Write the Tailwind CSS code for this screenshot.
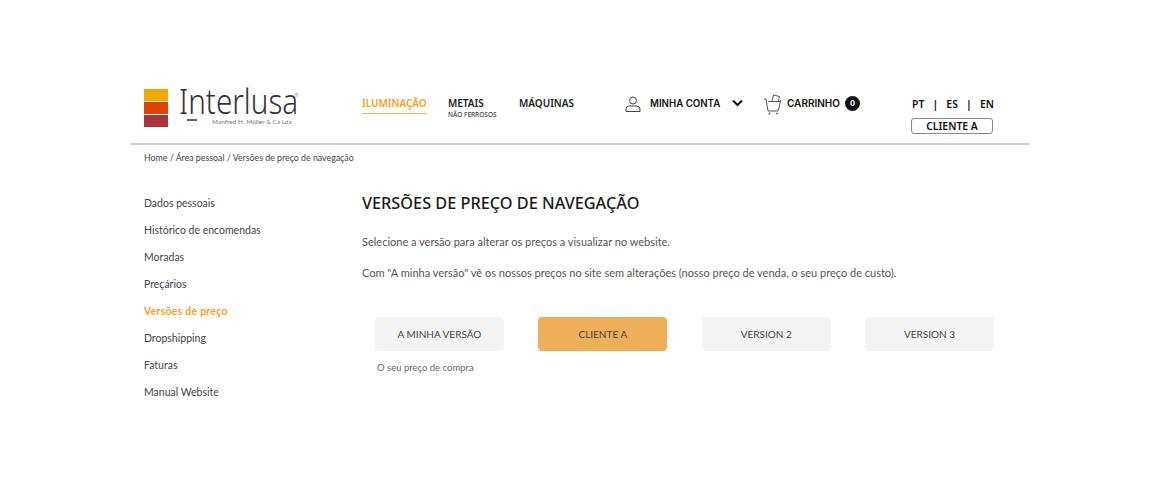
<!DOCTYPE html>
<html lang="pt">
<head>
<meta charset="utf-8">
<script src="https://cdn.jsdelivr.net/npm/@tailwindcss/browser@4"></script>
<title>Interlusa</title>
</head>
<body class="bg-white font-['Lato','Open_Sans',sans-serif] text-[#3c3c3c] w-[1160px] h-[480px] overflow-hidden">
<div class="w-[900px] ml-[130px] pt-[85px]">
  <header class="h-[60px] flex border-b-2 border-[#cfcfcf] pl-[14px] relative">
    <div class="w-[218px] shrink-0 flex items-start pt-[4px]">
      <div class="w-[24px] flex flex-col gap-[1.5px]">
        <div class="h-[11.5px] bg-[#f5a800]"></div>
        <div class="h-[11.5px] bg-[#e04403]"></div>
        <div class="h-[11.5px] bg-[#a93338]"></div>
      </div>
      <div class="ml-[11px] relative h-[40px] w-[120px]">
        <div class="-mt-[3px] font-['Noto_Sans',sans-serif] font-light text-[34px] leading-[30px] text-[#333] scale-x-[0.87] origin-left">Interlusa</div>
        <div class="absolute left-[33px] top-[29px] text-[6.5px] leading-[8px] text-[#777] whitespace-nowrap">Manfred H. Müller &amp; Ca Lda</div>
        <div class="absolute left-[8px] top-[30px] w-[10px] h-[1.5px] bg-[#666]"></div>
        <div class="absolute left-[115px] top-[3px] text-[6px] leading-[6px] text-[#999]">®</div>
      </div>
    </div>
    <nav class="flex items-start w-[263px] shrink-0 pt-[11px] text-[10px] font-semibold font-['Noto_Sans',sans-serif] leading-[15px] text-[#222]">
      <div class="w-[86px]"><span class="inline-block text-[#f9a01b] border-b border-[#f9b255] pb-[2px]">ILUMINAÇÃO</span></div>
      <div class="w-[71px]">METAIS<div class="text-[6.5px] leading-[7px] font-medium text-[#444]">NÃO FERROSOS</div></div>
      <div>MÁQUINAS</div>
    </nav>
    <div class="flex items-start pt-[9px] text-[9.7px] font-semibold font-['Inter',sans-serif] text-[#111] w-[286px] shrink-0">
      <svg class="w-[16px] h-[16px] mt-[2px]" viewBox="0 0 16 16" fill="none" stroke="#444" stroke-width="1"><circle cx="8" cy="4.5" r="3.5"/><path d="M1 15.5v-2.500q0-3 3-3h8q3 0 3 3v2.500z"/></svg>
      <span class="ml-[9px] mt-[3px] leading-[14px] w-[82px]">MINHA CONTA</span>
      <svg class="w-[11px] h-[8px] mt-[5px]" viewBox="0 0 11 8" fill="none" stroke="#111" stroke-width="2"><path d="M1 1.500l4.500 4.500 4.500-4.500"/></svg>
      <svg class="w-[20px] h-[22px] ml-[20px] mt-[-1px]" viewBox="0 0 20 22" fill="none" stroke="#444" stroke-width="0.9"><path d="M1 6h2l2 12h10l3-11"/><path d="M5 8.500h12"/><path d="M9 8l1.500-6 6 1.500-1.200 4.500"/><circle cx="6.500" cy="20.500" r=".6"/><circle cx="14" cy="20.500" r=".6"/></svg>
      <span class="ml-[4px] mt-[2px] leading-[14px] text-[10px]">CARRINHO</span>
      <span class="ml-[5px] mt-[2px] w-[15px] h-[15px] rounded-full bg-[#111] text-white text-[7.5px] font-bold flex items-center justify-center">0</span>
    </div>
    <div class="w-[82px] shrink-0 pt-[12px] font-['Noto_Sans',sans-serif] text-[10.4px] font-semibold text-[#111] leading-[15px]">
      <div class="flex justify-between pl-[1px] -mr-[1px]"><span>PT</span><span class="font-bold">|</span><span>ES</span><span class="font-bold">|</span><span>EN</span></div>
      <div class="mt-[6px] h-[16px] border border-[#8a8a8a] rounded-[3px] flex items-center justify-center leading-[14px]">CLIENTE A</div>
    </div>
  </header>
  <div class="pl-[14px] pt-[6px] text-[8.8px] leading-[13px] text-[#444]">Home / Área pessoal / Versões de preço de navegação</div>
  <main class="flex pl-[14px] pt-[25px]">
    <aside class="w-[218px] shrink-0 pt-[1px] text-[10.5px] leading-[27px] text-[#444] flex flex-col">
      <a>Dados pessoais</a>
      <a>Histórico de encomendas</a>
      <a>Moradas</a>
      <a>Preçários</a>
      <a class="font-bold text-[#f9a01b] tracking-[0.24px]">Versões de preço</a>
      <a>Dropshipping</a>
      <a>Faturas</a>
      <a>Manual Website</a>
    </aside>
    <section class="flex-1">
      <h1 class="font-['Noto_Sans',sans-serif] font-medium text-[16.3px] leading-[20px] mt-[4px] text-[#1a1a1a]">VERSÕES DE PREÇO DE NAVEGAÇÃO</h1>
      <p class="text-[11px] leading-[15px] mt-[21px] text-[#555]">Selecione a versão para alterar os preços a visualizar no website.</p>
      <p class="text-[11px] leading-[15px] mt-[16px] text-[#555]">Com "A minha versão" vê os nossos preços no site sem alterações (nosso preço de venda, o seu preço de custo).</p>
      <div class="grid grid-cols-4 gap-[34.500px] w-[619px] ml-[13px] mt-[37px] text-[10px] text-[#444]">
        <div>
          <div class="h-[34px] rounded-[4px] bg-[#f4f4f4] flex items-center justify-center">A MINHA VERSÃO</div>
          <p class="text-[9.500px] leading-[13px] text-[#666] mt-[10px] ml-[2px]">O seu preço de compra</p>
        </div>
        <div class="h-[34px] rounded-[4px] bg-[#efae58] flex items-center justify-center">CLIENTE A</div>
        <div class="h-[34px] rounded-[4px] bg-[#f4f4f4] flex items-center justify-center">VERSION 2</div>
        <div class="h-[34px] rounded-[4px] bg-[#f4f4f4] flex items-center justify-center">VERSION 3</div>
      </div>
    </section>
  </main>
</div>
</body>
</html>
